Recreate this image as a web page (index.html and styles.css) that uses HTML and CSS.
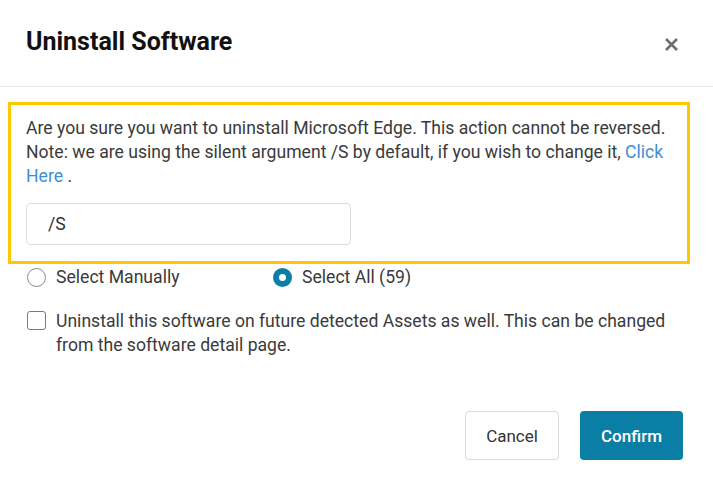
FILE: index.html
```html
<!DOCTYPE html>
<html>
<head>
<meta charset="utf-8">
<link rel="stylesheet" href="styles.css">
</head>
<body>
<div class="dialog">
  <div class="header">
    <h1 class="title">Uninstall Software</h1>
    <button class="close" aria-label="Close">
      <svg width="15" height="15" viewBox="0 0 15 15"><path d="M2 2 L13 13 M13 2 L2 13" stroke="#6f6f6f" stroke-width="2.6" stroke-linecap="butt"/></svg>
    </button>
  </div>
  <div class="body">
    <div class="highlight">
      <p class="msg">Are you sure you want to uninstall Microsoft Edge. This action cannot be reversed. Note: we are using the silent argument /S by default, if you wish to change it, <a class="link" href="#">Click Here</a> .</p>
      <div class="input">/S</div>
    </div>
    <div class="radios">
      <label class="radio"><span class="circle"></span>Select Manually</label>
      <label class="radio"><span class="circle on"></span>Select All (59)</label>
    </div>
    <label class="check"><span class="box"></span><span class="check-text">Uninstall this software on future detected Assets as well. This can be changed from the software detail page.</span></label>
  </div>
  <div class="footer">
    <button class="btn cancel">Cancel</button>
    <button class="btn confirm">Confirm</button>
  </div>
</div>
</body>
</html>
```

FILE: styles.css
```css
html, body {
  margin: 0;
  padding: 0;
  background: #fff;
}
body {
  font-family: Roboto, "Liberation Sans", sans-serif;
  color: #3a3a3a;
  font-size: 17.6px;
}
.dialog {
  width: 713px;
  height: 489px;
  display: flex;
  flex-direction: column;
}
.header {
  height: 87px;
  border-bottom: 1px solid #e6e6e6;
  display: flex;
  align-items: center;
  justify-content: space-between;
  padding: 0 34px 0 26px;
  box-sizing: border-box;
}
.title {
  margin: 0;
  font-size: 25px;
  font-weight: 700;
  color: #111;
  position: relative;
  top: -2px;
}
.close {
  border: 0;
  background: none;
  padding: 0;
  width: 15px;
  height: 15px;
  display: flex;
  position: relative;
  top: 1px;
}
.body {
  padding: 15px 23px 0 8px;
}
.highlight {
  border: 3px solid #fdc800;
  padding: 11px 15px 16px 15px;
}
.msg {
  margin: 0;
  line-height: 24px;
}
.link {
  color: #3d8fd1;
  text-decoration: none;
}
.input {
  margin-top: 15px;
  width: 325px;
  height: 42px;
  box-sizing: border-box;
  border: 1px solid #dcdcdc;
  border-radius: 4px;
  padding-left: 21px;
  display: flex;
  align-items: center;
  color: #333;
}
.radios {
  display: flex;
  margin-top: 1px;
  padding-left: 19px;
  height: 24px;
}
.radio {
  display: flex;
  align-items: center;
  gap: 10px;
  line-height: 24px;
}
.radio:first-child {
  width: 246px;
}
.circle {
  width: 19px;
  height: 19px;
  box-sizing: border-box;
  border: 1px solid #8a8a8a;
  border-radius: 50%;
  display: inline-block;
}
.circle.on {
  border: 6px solid #0a7ea4;
  background: #fff;
}
.check {
  display: flex;
  gap: 10px;
  margin-top: 20px;
  padding-left: 19px;
  line-height: 24px;
}
.box {
  flex: none;
  width: 19px;
  height: 19px;
  box-sizing: border-box;
  border: 1px solid #7a7a7a;
  border-radius: 3px;
  margin-top: 2px;
}
.check-text {
  width: 615px;
}
.footer {
  margin-top: auto;
  display: flex;
  justify-content: flex-end;
  gap: 21px;
  padding: 0 30px 29px 0;
}
.btn {
  height: 49px;
  border-radius: 4px;
  font-family: Roboto, "Liberation Sans", sans-serif;
  font-size: 17px;
  cursor: pointer;
}
.cancel {
  width: 94px;
  background: #fff;
  border: 1px solid #dadada;
  color: #333;
}
.confirm {
  width: 103px;
  background: #0a7ea4;
  border: 0;
  color: #fff;
  font-weight: 500;
}
```
